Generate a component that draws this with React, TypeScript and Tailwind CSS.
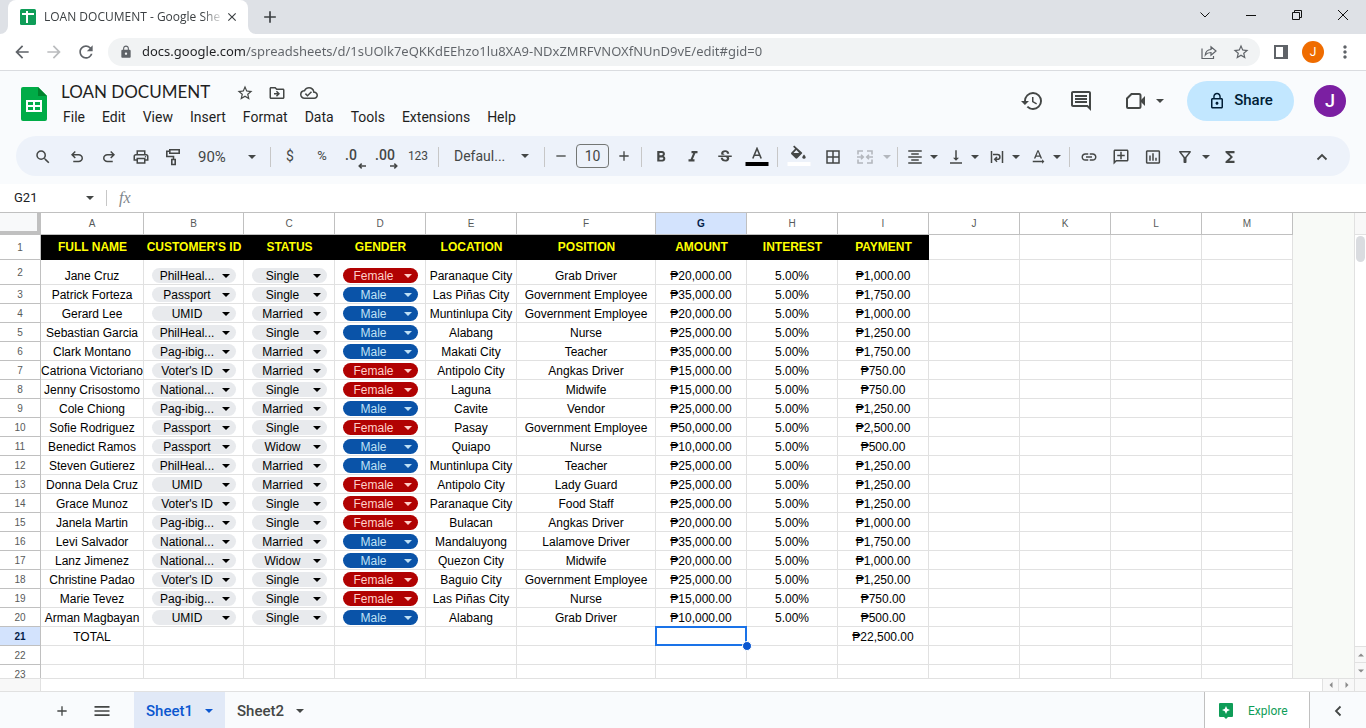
import React from 'react';
import type { IconType } from 'react-icons';
import {
  MdAdd,
  MdArrowBack,
  MdArrowForward,
  MdBorderAll,
  MdClose,
  MdFormatAlignCenter,
  MdFormatBold,
  MdFormatItalic,
  MdFunctions,
  MdHistory,
  MdInsertChartOutlined,
  MdLink,
  MdLock,
  MdLockOutline,
  MdMenu,
  MdMoreVert,
  MdOutlineAddComment,
  MdOutlineCloudDone,
  MdOutlineComment,
  MdOutlineDriveFileMove,
  MdOutlineFilterAlt,
  MdOutlinePrint,
  MdRefresh,
  MdRemove,
  MdSearch,
  MdStarOutline,
  MdStrikethroughS,
  MdTextRotationNone,
  MdVerticalAlignBottom,
} from 'react-icons/md';

// [name, id, status, gender, location, position, amount, payment]
type Loan = [string, string, string, string, string, string, string, string];

const loans: Loan[] = [
  ['Jane Cruz', 'PhilHeal...', 'Single', 'Female', 'Paranaque City', 'Grab Driver', '₱20,000.00', '₱1,000.00'],
  ['Patrick Forteza', 'Passport', 'Single', 'Male', 'Las Piñas City', 'Government Employee', '₱35,000.00', '₱1,750.00'],
  ['Gerard Lee', 'UMID', 'Married', 'Male', 'Muntinlupa City', 'Government Employee', '₱20,000.00', '₱1,000.00'],
  ['Sebastian Garcia', 'PhilHeal...', 'Single', 'Male', 'Alabang', 'Nurse', '₱25,000.00', '₱1,250.00'],
  ['Clark Montano', 'Pag-ibig...', 'Married', 'Male', 'Makati City', 'Teacher', '₱35,000.00', '₱1,750.00'],
  ['Catriona Victoriano', "Voter's ID", 'Married', 'Female', 'Antipolo City', 'Angkas Driver', '₱15,000.00', '₱750.00'],
  ['Jenny Crisostomo', 'National...', 'Single', 'Female', 'Laguna', 'Midwife', '₱15,000.00', '₱750.00'],
  ['Cole Chiong', 'Pag-ibig...', 'Married', 'Male', 'Cavite', 'Vendor', '₱25,000.00', '₱1,250.00'],
  ['Sofie Rodriguez', 'Passport', 'Single', 'Female', 'Pasay', 'Government Employee', '₱50,000.00', '₱2,500.00'],
  ['Benedict Ramos', 'Passport', 'Widow', 'Male', 'Quiapo', 'Nurse', '₱10,000.00', '₱500.00'],
  ['Steven Gutierez', 'PhilHeal...', 'Married', 'Male', 'Muntinlupa City', 'Teacher', '₱25,000.00', '₱1,250.00'],
  ['Donna Dela Cruz', 'UMID', 'Married', 'Female', 'Antipolo City', 'Lady Guard', '₱25,000.00', '₱1,250.00'],
  ['Grace Munoz', "Voter's ID", 'Single', 'Female', 'Paranaque City', 'Food Staff', '₱25,000.00', '₱1,250.00'],
  ['Janela Martin', 'Pag-ibig...', 'Single', 'Female', 'Bulacan', 'Angkas Driver', '₱20,000.00', '₱1,000.00'],
  ['Levi Salvador', 'National...', 'Married', 'Male', 'Mandaluyong', 'Lalamove Driver', '₱35,000.00', '₱1,750.00'],
  ['Lanz Jimenez', 'National...', 'Widow', 'Male', 'Quezon City', 'Midwife', '₱20,000.00', '₱1,000.00'],
  ['Christine Padao', "Voter's ID", 'Single', 'Female', 'Baguio City', 'Government Employee', '₱25,000.00', '₱1,250.00'],
  ['Marie Tevez', 'Pag-ibig...', 'Single', 'Female', 'Las Piñas City', 'Nurse', '₱15,000.00', '₱750.00'],
  ['Arman Magbayan', 'UMID', 'Single', 'Male', 'Alabang', 'Grab Driver', '₱10,000.00', '₱500.00'],
];

const columns = [
  { letter: 'A', width: 'w-[103px]', title: 'FULL NAME' },
  { letter: 'B', width: 'w-[100px]', title: "CUSTOMER'S ID" },
  { letter: 'C', width: 'w-[91px]', title: 'STATUS' },
  { letter: 'D', width: 'w-[91px]', title: 'GENDER' },
  { letter: 'E', width: 'w-[91px]', title: 'LOCATION' },
  { letter: 'F', width: 'w-[139px]', title: 'POSITION' },
  { letter: 'G', width: 'w-[91px]', title: 'AMOUNT' },
  { letter: 'H', width: 'w-[91px]', title: 'INTEREST' },
  { letter: 'I', width: 'w-[91px]', title: 'PAYMENT' },
  { letter: 'J', width: 'w-[91px]' },
  { letter: 'K', width: 'w-[91px]' },
  { letter: 'L', width: 'w-[91px]' },
  { letter: 'M', width: 'w-[91px]' },
];

const idOptions = ['PhilHeal...', 'Passport', 'UMID', 'Pag-ibig...', "Voter's ID", 'National...'];
const statusOptions = ['Single', 'Married', 'Widow'];
const genderOptions = ['Female', 'Male'];

const menus = ['File', 'Edit', 'View', 'Insert', 'Format', 'Data', 'Tools', 'Extensions', 'Help'];

const URL_TEXT =
  'docs.google.com/spreadsheets/d/1sUOlk7eQKKdEEhzo1lu8XA9-NDxZMRFVNOXfNUnD9vE/edit#gid=0';

function Caret({ className = '' }: { className?: string }) {
  return (
    <svg viewBox="0 0 8 4" className={`h-1 w-2 shrink-0 ${className}`} fill="currentColor" aria-hidden="true">
      <path d="M0 0h8L4 4z" />
    </svg>
  );
}

function Chevron({ d }: { d: string }) {
  return (
    <svg viewBox="0 0 12 12" className="size-3" fill="none" stroke="currentColor" strokeWidth="1.800" aria-hidden="true">
      <path d={d} />
    </svg>
  );
}

/* ---------- Browser chrome ---------- */

function TabStrip() {
  return (
    <div className="flex h-[34px] shrink-0 bg-[#dee1e6] pl-2">
      <div className="relative flex w-60 items-center rounded-t-lg bg-white pl-3 pr-2">
        <svg viewBox="0 0 8 8" className="absolute -left-2 bottom-0 size-2" aria-hidden="true">
          <path d="M8 0v8H0a8 8 0 0 0 8-8z" fill="#fff" />
        </svg>
        <svg viewBox="0 0 8 8" className="absolute -right-2 bottom-0 size-2" aria-hidden="true">
          <path d="M0 0v8h8a8 8 0 0 1-8-8z" fill="#fff" />
        </svg>
        <svg viewBox="0 0 16 16" className="size-4 shrink-0" aria-hidden="true">
          <rect width="16" height="16" rx="1.5" fill="#0f9d58" />
          <path d="M2 5h12M7 2v12" stroke="#fff" strokeWidth="2" />
        </svg>
        <span className="ml-2 min-w-0 flex-1 whitespace-nowrap font-['Open_Sans',sans-serif] text-xs text-[#3c4043] [mask-image:linear-gradient(90deg,#000_88%,transparent)]">
          LOAN DOCUMENT - Google She
        </span>
        <button aria-label="Close tab" className="grid size-4 place-items-center text-[#3c4043]">
          <MdClose className="size-3.5" />
        </button>
      </div>
      <button aria-label="New tab" className="ml-3 grid w-5 place-items-center text-[#3c4043]">
        <MdAdd className="size-5" />
      </button>
      <div className="ml-auto flex pb-1 text-[#111]">
        <button aria-label="Search tabs" className="grid w-[46px] place-items-center">
          <svg viewBox="0 0 10 10" className="size-2.5" fill="none" stroke="currentColor" aria-hidden="true">
            <path d="M.5 2.500 5 7l4.500-4.500" />
          </svg>
        </button>
        <button aria-label="Minimize" className="grid w-[46px] place-items-center">
          <svg viewBox="0 0 10 10" className="size-2.5" stroke="currentColor" aria-hidden="true">
            <path d="M0 5.500h10" />
          </svg>
        </button>
        <button aria-label="Restore" className="grid w-[46px] place-items-center">
          <svg viewBox="0 0 10 10" className="size-2.5" fill="none" stroke="currentColor" aria-hidden="true">
            <path d="M.5 2.500h7v7h-7zM2.500 2.500v-2h7v7h-2" />
          </svg>
        </button>
        <button aria-label="Close" className="grid w-[46px] place-items-center">
          <svg viewBox="0 0 10 10" className="size-2.5" stroke="currentColor" aria-hidden="true">
            <path d="m0 0 10 10M10 0 0 10" />
          </svg>
        </button>
      </div>
    </div>
  );
}

function AddressBar() {
  return (
    <div className="flex h-[37px] shrink-0 items-center border-b border-[#dadce0] bg-white pl-1.5 pr-[5px] text-[#5f6368]">
      <button aria-label="Back" className="grid w-8 place-items-center">
        <MdArrowBack className="size-5" />
      </button>
      <button aria-label="Forward" className="grid w-8 place-items-center text-[#babcbe]">
        <MdArrowForward className="size-5" />
      </button>
      <button aria-label="Reload" className="grid w-8 place-items-center">
        <MdRefresh className="size-5" />
      </button>
      <div className="ml-1.5 flex h-7 flex-1 items-center rounded-full bg-[#f1f3f4] pl-[11px] pr-[3px]">
        <MdLock className="size-3.5" />
        <input
          aria-label="Address"
          defaultValue={URL_TEXT}
          className="ml-[9px] min-w-0 flex-1 bg-[linear-gradient(90deg,#202124_104px,#5f6368_104px)] bg-clip-text font-['Noto_Sans',sans-serif] text-[13px] text-transparent outline-none"
        />
        <button aria-label="Share this page" className="grid w-8 place-items-center">
          <svg viewBox="0 0 16 16" className="size-4" fill="none" stroke="currentColor" strokeWidth="1.200" aria-hidden="true">
            <path d="M1 4.500V14.500h11.500V12" />
            <path d="M4.300 11c.3-3.500 2.200-5.300 5.700-5.500V2.800L15 7l-5 4.200V8.500c-2.500 0-4.300.7-5.700 2.500z" />
          </svg>
        </button>
        <button aria-label="Bookmark" className="grid w-8 place-items-center">
          <MdStarOutline className="size-[18px]" />
        </button>
      </div>
      <button aria-label="Side panel" className="ml-[5px] grid w-8 place-items-center">
        <svg viewBox="0 0 14 14" className="size-3.5" aria-hidden="true">
          <path d="M1 1h12v12H1z" fill="none" stroke="currentColor" strokeWidth="2" />
          <path d="M9 0h5v14H9z" fill="currentColor" />
        </svg>
      </button>
      <button aria-label="Profile" className="grid w-8 place-items-center">
        <span className="grid size-[22px] place-items-center rounded-full bg-[#ef6c00] font-['Roboto',sans-serif] text-xs text-white">
          J
        </span>
      </button>
      <button aria-label="Browser menu" className="grid w-8 place-items-center">
        <MdMoreVert className="size-5" />
      </button>
    </div>
  );
}

/* ---------- Document header ---------- */

function DocHeader() {
  return (
    <header className="flex h-[65px] shrink-0 pl-[21px] pr-5 text-[#444746]">
      <svg viewBox="0 0 26 34" className="mt-4 h-[34px] w-[26px] shrink-0" aria-label="Sheets home">
        <path d="M2 0h15l9 9v23a2 2 0 0 1-2 2H2a2 2 0 0 1-2-2V2a2 2 0 0 1 2-2z" fill="#00ac47" />
        <path d="M17 0l9 9h-9z" fill="#00832d" />
        <path d="M5 13h16v12H5z" fill="#fff" />
        <path d="M7 15h5v3H7zM14 15h5v3h-5zM7 20h5v3H7zM14 20h5v3h-5z" fill="#00ac47" />
      </svg>
      <div className="ml-3.5 pt-2.5">
        <div className="flex items-center">
          <input
            aria-label="Rename"
            defaultValue="LOAN DOCUMENT"
            className="field-sizing-content h-6 min-w-[152px] bg-transparent pb-0.5 font-['Lato',sans-serif] text-[17px] text-[#1f1f1f] outline-none"
          />
          <button aria-label="Star" className="ml-4 grid w-8 place-items-center">
            <MdStarOutline className="size-[18px]" />
          </button>
          <button aria-label="Move" className="grid w-8 place-items-center">
            <MdOutlineDriveFileMove className="size-[18px]" />
          </button>
          <button aria-label="See document status" className="grid w-8 place-items-center">
            <MdOutlineCloudDone className="size-[18px]" />
          </button>
        </div>
        <nav className="flex h-6 items-center gap-[17px] pl-0.5 font-['Roboto',sans-serif] text-sm text-[#1f1f1f]">
          {menus.map((menu) => (
            <button key={menu}>{menu}</button>
          ))}
        </nav>
      </div>
      <div className="ml-auto flex items-center pb-1.5">
        <button aria-label="Version history" className="grid w-10 place-items-center">
          <MdHistory className="size-6" />
        </button>
        <button aria-label="Comments" className="ml-[9px] grid w-10 place-items-center">
          <MdOutlineComment className="size-6" />
        </button>
        <button aria-label="Join a call" className="ml-[25px] flex items-center">
          <svg viewBox="0 0 20 16" className="h-4 w-5" aria-hidden="true">
            <path d="M5.500 1H13a1.500 1.500 0 0 1 1.500 1.500v11A1.500 1.500 0 0 1 13 15H2a1 1 0 0 1-1-1V5.500z" fill="none" stroke="currentColor" strokeWidth="2" />
            <path d="M14 8l5-5v10z" fill="currentColor" />
          </svg>
          <Caret className="ml-2.5" />
        </button>
        <button className="ml-[23px] flex h-10 w-[107px] items-center justify-center gap-2 rounded-full bg-[#c2e7ff] font-['Roboto',sans-serif] text-[15px] font-medium text-[#001d35]">
          <MdLockOutline className="size-[18px]" />
          Share
        </button>
        <button
          aria-label="Account"
          className="ml-5 grid size-8 place-items-center rounded-full bg-[#7b1fa2] font-['Roboto',sans-serif] text-lg font-medium text-white"
        >
          J
        </button>
      </div>
    </header>
  );
}

/* ---------- Toolbar ---------- */

function Tool({ icon: Icon, label, className = '' }: { icon: IconType; label: string; className?: string }) {
  return (
    <button aria-label={label} className="grid h-8 w-8 shrink-0 place-items-center">
      <Icon className={`size-[18px] ${className}`} />
    </button>
  );
}

function Sep() {
  return <span className="ml-1 mr-[3px] h-5 w-px shrink-0 bg-[#c7c7c7]" />;
}

function SplitTool({ label, children }: { label: string; children: React.ReactNode }) {
  return (
    <div className="mr-1 flex shrink-0 items-center">
      <button aria-label={label} className="grid h-8 w-7 place-items-center">
        {children}
      </button>
      <button aria-label={`${label} options`} className="grid h-8 w-[9px] place-items-center">
        <Caret />
      </button>
    </div>
  );
}

function ToolSelect({ label, value, className }: { label: string; value: string; className: string }) {
  return (
    <span className={`grid shrink-0 items-center ${className}`}>
      <select aria-label={label} defaultValue={value} className="col-start-1 row-start-1 h-8 w-full appearance-none bg-transparent outline-none">
        <option>{value}</option>
      </select>
      <Caret className="pointer-events-none col-start-1 row-start-1 justify-self-end" />
    </span>
  );
}

const UNDO_PATH =
  'M7 19v-2h7.100q1.575 0 2.737-1Q18 15 18 13.500T16.837 11q-1.162-1-2.737-1H7.800l2.600 2.600L9 14 4 9l5-5 1.400 1.400L7.800 8h6.300q2.425 0 4.163 1.575Q20 11.150 20 13.500q0 2.350-1.737 3.925Q16.525 19 14.100 19z';

function Toolbar() {
  return (
    <div
      role="toolbar"
      className="mx-4 mb-2 flex h-10 shrink-0 items-center rounded-full bg-[#edf2fa] pl-[11px] pr-3 pt-0.5 font-['Roboto',sans-serif] text-[#444746]"
    >
      <Tool icon={MdSearch} label="Search the menus" />
      <button aria-label="Undo" className="ml-0.5 grid h-8 w-8 place-items-center">
        <svg viewBox="0 0 24 24" className="size-[18px]" fill="currentColor" aria-hidden="true">
          <path d={UNDO_PATH} />
        </svg>
      </button>
      <button aria-label="Redo" className="grid h-8 w-8 place-items-center">
        <svg viewBox="0 0 24 24" className="size-[18px] -scale-x-100" fill="currentColor" aria-hidden="true">
          <path d={UNDO_PATH} />
        </svg>
      </button>
      <Tool icon={MdOutlinePrint} label="Print" />
      <button aria-label="Paint format" className="grid h-8 w-8 place-items-center">
        <svg viewBox="0 0 16 18" className="h-[18px] w-4" fill="none" stroke="currentColor" strokeWidth="1.600" aria-hidden="true">
          <path d="M4.800 1.800h9.400v3.400H4.800zM4.800 3.300H1.800v5.200h6.700v3" />
          <path d="M6.800 11.500h3.400v5H6.800z" />
        </svg>
      </button>
      <ToolSelect label="Zoom" value="90%" className="w-[77px] pl-[9px] pr-2.5 text-[15px]" />
      <Sep />
      <button aria-label="Format as currency" className="grid h-8 w-8 place-items-center pb-0.5 text-sm">$</button>
      <button aria-label="Format as percent" className="grid h-8 w-8 place-items-center pb-0.5 text-[13px]">%</button>
      <button aria-label="Decrease decimal places" className="relative h-8 w-8 pb-1 pr-1.5 text-sm font-medium">
        .0
        <svg viewBox="0 0 8 6" className="absolute bottom-1 right-1 h-1.5 w-2" fill="none" stroke="currentColor" strokeWidth="1.500" aria-hidden="true">
          <path d="M8 3H1.500M3.700.6 1.200 3l2.500 2.400" />
        </svg>
      </button>
      <button aria-label="Increase decimal places" className="relative h-8 w-8 pb-1 pr-0.5 text-sm font-medium">
        .00
        <svg viewBox="0 0 8 6" className="absolute bottom-1 right-1 h-1.5 w-2" fill="none" stroke="currentColor" strokeWidth="1.500" aria-hidden="true">
          <path d="M0 3h6.500M4.300.6 6.800 3 4.300 5.400" />
        </svg>
      </button>
      <button aria-label="More formats" className="grid h-8 w-8 place-items-center pb-0.5 text-xs">123</button>
      <Sep />
      <ToolSelect label="Font" value="Defaul..." className="w-[98px] pl-3 pr-[11px] pb-0.5 text-sm" />
      <Sep />
      <button aria-label="Decrease font size" className="grid h-8 w-[26px] place-items-center pb-0.5">
        <MdRemove className="size-4" />
      </button>
      <input
        aria-label="Font size"
        defaultValue="10"
        className="mx-0.5 mb-0.5 h-6 w-[33px] rounded border border-[#747775] bg-transparent text-center text-sm outline-none"
      />
      <button aria-label="Increase font size" className="grid h-8 w-[26px] place-items-center pb-0.5">
        <MdAdd className="size-4" />
      </button>
      <Sep />
      <Tool icon={MdFormatBold} label="Bold" />
      <Tool icon={MdFormatItalic} label="Italic" />
      <Tool icon={MdStrikethroughS} label="Strikethrough" />
      <button aria-label="Text color" className="grid h-8 w-8 place-items-center">
        <svg viewBox="0 0 24 20" className="h-5 w-6" aria-hidden="true">
          <path d="M7.800 11.500 12 1.500l4.200 10M9.200 8.300h5.600" fill="none" stroke="currentColor" strokeWidth="1.600" />
          <path d="M.5 15h23v4H.5z" fill="#000" />
        </svg>
      </button>
      <Sep />
      <button aria-label="Fill color" className="grid h-8 w-9 place-items-center pb-0.5">
        <svg viewBox="0 0 24 22" className="h-[22px] w-6" fill="currentColor" aria-hidden="true">
          <path d="M7.200.6 6.100 1.700l2 2-3.700 3.700c-.5.5-.5 1.300 0 1.800l4.100 4.100c.5.5 1.300.5 1.800 0l4.700-4.700c.3-.3.3-.8 0-1.100zM6.500 8 9.300 5.100 12.200 8z" />
          <path d="M17 9.500s-1.600 1.700-1.600 2.700a1.600 1.600 0 0 0 3.200 0c0-1-1.600-2.700-1.600-2.700z" />
          <path d="M.5 17h23v4H.5z" fill="#fff" />
        </svg>
      </button>
      <Tool icon={MdBorderAll} label="Borders" />
      <button aria-label="Select merge type" disabled className="grid h-8 w-8 place-items-center text-[#b3b7bd]">
        <svg viewBox="0 0 16 14" className="h-3.5 w-4" fill="none" stroke="currentColor" strokeWidth="1.600" aria-hidden="true">
          <path d="M6 1H1v3.500M1 9.500V13h5M10 1h5v3.500M15 9.500V13h-5M0 7h6M16 7h-6M4 4.700 6.300 7 4 9.300M12 4.700 9.700 7l2.300 2.300" />
        </svg>
      </button>
      <button aria-label="Merge options" disabled className="grid h-8 w-3 place-items-center text-[#b3b7bd]">
        <Caret />
      </button>
      <Sep />
      <SplitTool label="Horizontal align">
        <MdFormatAlignCenter className="size-[18px]" />
      </SplitTool>
      <SplitTool label="Vertical align">
        <MdVerticalAlignBottom className="size-[18px]" />
      </SplitTool>
      <SplitTool label="Text wrapping">
        <svg viewBox="0 0 14 14" className="size-3.5" fill="none" stroke="currentColor" strokeWidth="1.500" aria-hidden="true">
          <path d="M1.500 1v12M12.500 1v12M3 4.500h4.500a2.300 2.300 0 0 1 0 4.800H5M7 6.900 4.700 9.300 7 11.700" />
        </svg>
      </SplitTool>
      <SplitTool label="Text rotation">
        <MdTextRotationNone className="size-[18px]" />
      </SplitTool>
      <Sep />
      <Tool icon={MdLink} label="Insert link" />
      <Tool icon={MdOutlineAddComment} label="Insert comment" className="-scale-x-100" />
      <Tool icon={MdInsertChartOutlined} label="Insert chart" />
      <Tool icon={MdOutlineFilterAlt} label="Create a filter" />
      <button aria-label="Filter views" className="mr-1 grid h-8 w-[9px] place-items-center">
        <Caret />
      </button>
      <Tool icon={MdFunctions} label="Functions" />
      <button aria-label="Hide the menus" className="ml-auto grid h-8 w-8 place-items-center">
        <Chevron d="M1.500 8.500 6 4l4.500 4.500" />
      </button>
    </div>
  );
}

function FormulaBar() {
  return (
    <div className="flex h-7 shrink-0 items-center bg-white pl-3.5 text-[#444746]">
      <input
        aria-label="Name box"
        defaultValue="G21"
        className="w-[72px] bg-transparent font-['Roboto',sans-serif] text-[13px] text-[#202124] outline-none"
      />
      <Caret />
      <span className="ml-3 h-4 w-px bg-[#c7c7c7]" />
      <label htmlFor="formula" className="ml-3 font-['Liberation_Serif',serif] text-base italic text-[#80868b]">
        fx
      </label>
      <input id="formula" className="ml-2 min-w-0 flex-1 bg-transparent text-xs outline-none" />
    </div>
  );
}

/* ---------- Grid ---------- */

function Chip({ label, value, options, tone }: { label: string; value: string; options: string[]; tone: string }) {
  return (
    <span className={`mb-px ml-2 mr-[7px] grid h-[15px] items-center rounded-full pr-1.5 ${tone}`}>
      <select
        aria-label={label}
        defaultValue={value}
        className="col-start-1 row-start-1 h-[15px] w-full appearance-none bg-transparent pr-2 pt-px text-center leading-[14px] outline-none"
      >
        {options.map((option) => (
          <option key={option}>{option}</option>
        ))}
      </select>
      <Caret className="pointer-events-none col-start-1 row-start-1 justify-self-end" />
    </span>
  );
}

const GREY = 'bg-[#e8eaed] text-black';
const RED = 'bg-[#b10202] text-[#ffcfc9]';
const BLUE = 'bg-[#0a53a8] text-[#bfe1f6]';

const cell = 'border-b border-r border-[#e1e1e1] bg-white p-0 align-bottom whitespace-nowrap';
const rowHead = 'border-b border-r border-[#c0c0c0] p-0 align-middle text-[10px]';

function EmptyCells({ from, to = columns.length }: { from: number; to?: number }) {
  return (
    <>
      {columns.slice(from, to).map((c) => (
        <td key={c.letter} className={cell} />
      ))}
    </>
  );
}

function RowHead({ n, active = false }: { n: number; active?: boolean }) {
  return (
    <th
      scope="row"
      className={`${rowHead} ${active ? 'bg-[#d3e3fd] font-bold text-[#041e49]' : 'bg-white font-normal text-[#575a5a]'}`}
    >
      {n}
    </th>
  );
}

function Sheet() {
  return (
    <table className="w-[1293px] table-fixed border-separate border-spacing-0 text-center font-['Liberation_Sans',Arial,sans-serif] text-xs leading-[15px] text-black">
      <colgroup>
        <col className="w-[41px]" />
        {columns.map((c) => (
          <col key={c.letter} className={c.width} />
        ))}
      </colgroup>
      <thead>
        <tr className="h-[22px]">
          <td className="border-b-4 border-r-4 border-[#c0c0c0] bg-[#f8f9fa] p-0" />
          {columns.map((c) => (
            <th
              key={c.letter}
              scope="col"
              className={`border-b border-r border-[#c0c0c0] p-0 text-[10px] ${
                c.letter === 'G' ? 'bg-[#d3e3fd] font-bold text-[#041e49]' : 'bg-white font-normal text-[#575a5a]'
              }`}
            >
              {c.letter}
            </th>
          ))}
        </tr>
      </thead>
      <tbody>
        <tr className="h-[25px]">
          <RowHead n={1} />
          {columns.slice(0, 9).map((c) => (
            <td key={c.letter} className="whitespace-nowrap bg-black p-0 align-middle font-bold text-[#ffff00]">
              {c.title}
            </td>
          ))}
          <EmptyCells from={9} />
        </tr>
        {loans.map(([name, id, status, gender, location, position, amount, payment], i) => (
          <tr key={name} className={i === 0 ? 'h-[25px]' : 'h-[19px]'}>
            <RowHead n={i + 2} />
            <td className={cell}>{name}</td>
            <td className={cell}>
              <Chip label={`${name} ID`} value={id} options={idOptions} tone={GREY} />
            </td>
            <td className={cell}>
              <Chip label={`${name} status`} value={status} options={statusOptions} tone={GREY} />
            </td>
            <td className={cell}>
              <Chip label={`${name} gender`} value={gender} options={genderOptions} tone={gender === 'Female' ? RED : BLUE} />
            </td>
            <td className={cell}>{location}</td>
            <td className={cell}>{position}</td>
            <td className={cell}>{amount}</td>
            <td className={cell}>5.00%</td>
            <td className={cell}>{payment}</td>
            <EmptyCells from={9} />
          </tr>
        ))}
        <tr className="h-[19px]">
          <RowHead n={21} active />
          <td className={cell}>TOTAL</td>
          <EmptyCells from={1} to={6} />
          <td className={`relative ${cell}`}>
            <span className="absolute -inset-px z-10 border-2 border-[#1a73e8]" />
            <span className="absolute -bottom-1.5 -right-1.5 z-10 size-[10px] rounded-full border border-white bg-[#0b57d0]" />
          </td>
          <EmptyCells from={7} to={8} />
          <td className={cell}>₱22,500.00</td>
          <EmptyCells from={9} />
        </tr>
        {[22, 23].map((n) => (
          <tr key={n} className="h-[19px]">
            <RowHead n={n} />
            <EmptyCells from={0} />
          </tr>
        ))}
      </tbody>
    </table>
  );
}

function ScrollButton({ label, d, className }: { label: string; d: string; className: string }) {
  return (
    <button aria-label={label} className={`grid place-items-center bg-[#f8f8f8] text-[#8a8a8a] ${className}`}>
      <svg viewBox="0 0 6 6" className="size-1.5" fill="currentColor" aria-hidden="true">
        <path d={d} />
      </svg>
    </button>
  );
}

function GridArea() {
  return (
    <main className="flex min-h-0 flex-1 flex-col border-t border-[#c0c0c0] bg-white">
      <div className="flex min-h-0 flex-1">
        <div className="min-w-0 flex-1 overflow-hidden bg-[#f8faf7]">
          <Sheet />
        </div>
        <div className="flex w-3 shrink-0 flex-col border-l border-[#e1e1e1] bg-white">
          <div className="h-[22px] border-b border-[#e1e1e1] bg-[#f8f8f8]" />
          <div className="mx-px mt-px h-[26px] rounded-full bg-[#dadce0]" />
          <ScrollButton label="Scroll up" d="M0 4.500h6l-3-3z" className="mt-auto h-4 border-t border-[#e1e1e1]" />
          <ScrollButton label="Scroll down" d="M0 1.500h6l-3 3z" className="h-4 border-t border-[#e1e1e1]" />
        </div>
      </div>
      <div className="flex h-[13px] shrink-0 border-t border-[#e1e1e1]">
        <div className="w-[41px] border-r border-[#e1e1e1] bg-[#f8f8f8]" />
        <div className="flex-1" />
        <ScrollButton label="Scroll left" d="M4.500 0v6l-3-3z" className="w-4 border-l border-[#e1e1e1]" />
        <ScrollButton label="Scroll right" d="M1.500 0v6l3-3z" className="w-4 border-l border-[#e1e1e1]" />
        <div className="w-3 border-l border-[#e1e1e1] bg-[#f8f8f8]" />
      </div>
    </main>
  );
}

function SheetTabs() {
  return (
    <footer className="flex h-[37px] shrink-0 items-stretch border-t border-[#e1e1e1] pl-[46px] font-['Roboto',sans-serif] text-[15px] font-medium text-[#444746]">
      <button aria-label="Add sheet" className="grid w-8 place-items-center pt-0.5">
        <MdAdd className="size-4" />
      </button>
      <button aria-label="All sheets" className="ml-2 mr-4 grid w-8 place-items-center pt-0.5">
        <MdMenu className="size-5" />
      </button>
      <button className="flex w-[91px] items-center justify-between bg-[#e1e9f7] px-3 pt-0.5 text-[#0b57d0]">
        Sheet1
        <Caret />
      </button>
      <button className="flex w-[91px] items-center justify-between px-3 pt-0.5">
        Sheet2
        <Caret />
      </button>
      <button className="ml-auto flex w-[106px] items-center gap-[15px] border-x border-[#c0c0c0] bg-white pl-3.5 pt-0.5 text-xs font-normal text-[#0f9d58]">
        <svg viewBox="0 0 14 16" className="h-4 w-3.5" aria-hidden="true">
          <path d="M1 0h12a1 1 0 0 1 1 1v12a1 1 0 0 1-1 1H9l-2 2-2-2H1a1 1 0 0 1-1-1V1a1 1 0 0 1 1-1z" fill="#0f9d58" />
          <path d="M7 3l1.200 2.800L11 7 8.200 8.200 7 11 5.800 8.200 3 7l2.800-1.200z" fill="#fff" />
        </svg>
        Explore
      </button>
      <button aria-label="Show side panel" className="grid w-14 place-items-center pt-0.5">
        <Chevron d="M8.500 1.500 4 6l4.500 4.500" />
      </button>
    </footer>
  );
}

export default function App() {
  return (
    <div className="flex h-screen flex-col overflow-hidden bg-[#f9fbfd]">
      <TabStrip />
      <AddressBar />
      <DocHeader />
      <Toolbar />
      <FormulaBar />
      <GridArea />
      <SheetTabs />
    </div>
  );
}
